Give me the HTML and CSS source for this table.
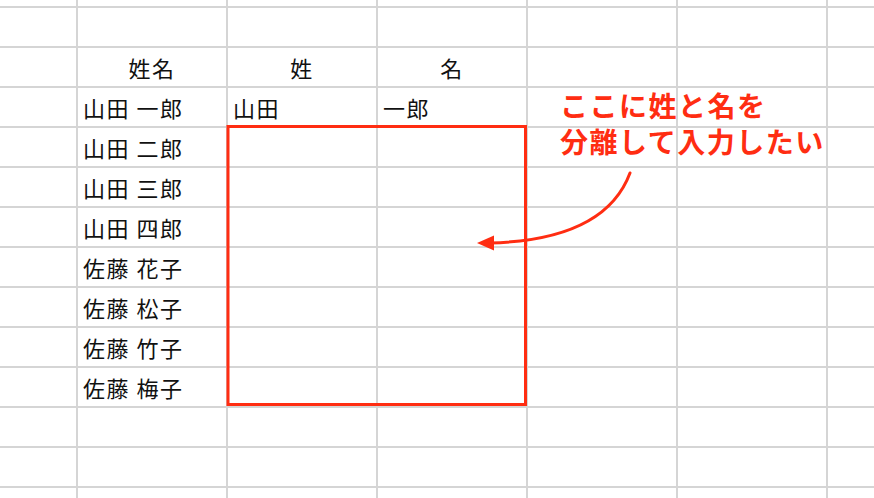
FILE: index.html
```html
<!DOCTYPE html>
<html lang="ja">
<head>
<meta charset="utf-8">
<title>姓名の分離</title>
<link rel="stylesheet" href="styles.css">
</head>
<body>
<div class="sheet">
  <div class="grid">
    <div class="c"></div><div class="c"></div><div class="c"></div><div class="c"></div><div class="c"></div><div class="c"></div><div class="c"></div>
    <div class="c"></div><div class="c"></div><div class="c"></div><div class="c"></div><div class="c"></div><div class="c"></div><div class="c"></div>
    <div class="c"></div><div class="c mid">姓名</div><div class="c mid">姓</div><div class="c mid">名</div><div class="c"></div><div class="c"></div><div class="c"></div>
    <div class="c"></div><div class="c">山田 一郎</div><div class="c">山田</div><div class="c">一郎</div><div class="c"></div><div class="c"></div><div class="c"></div>
    <div class="c"></div><div class="c">山田 二郎</div><div class="c"></div><div class="c"></div><div class="c"></div><div class="c"></div><div class="c"></div>
    <div class="c"></div><div class="c">山田 三郎</div><div class="c"></div><div class="c"></div><div class="c"></div><div class="c"></div><div class="c"></div>
    <div class="c"></div><div class="c">山田 四郎</div><div class="c"></div><div class="c"></div><div class="c"></div><div class="c"></div><div class="c"></div>
    <div class="c"></div><div class="c">佐藤 花子</div><div class="c"></div><div class="c"></div><div class="c"></div><div class="c"></div><div class="c"></div>
    <div class="c"></div><div class="c">佐藤 松子</div><div class="c"></div><div class="c"></div><div class="c"></div><div class="c"></div><div class="c"></div>
    <div class="c"></div><div class="c">佐藤 竹子</div><div class="c"></div><div class="c"></div><div class="c"></div><div class="c"></div><div class="c"></div>
    <div class="c"></div><div class="c">佐藤 梅子</div><div class="c"></div><div class="c"></div><div class="c"></div><div class="c"></div><div class="c"></div>
    <div class="c"></div><div class="c"></div><div class="c"></div><div class="c"></div><div class="c"></div><div class="c"></div><div class="c"></div>
    <div class="c"></div><div class="c"></div><div class="c"></div><div class="c"></div><div class="c"></div><div class="c"></div><div class="c"></div>
    <div class="c"></div><div class="c"></div><div class="c"></div><div class="c"></div><div class="c"></div><div class="c"></div><div class="c"></div>
  </div>
  <svg class="marks" width="874" height="498" viewBox="0 0 874 498">
    <rect x="228" y="126.5" width="297.5" height="278" fill="none" stroke="#ff2d12" stroke-width="3"/>
    <path d="M630 173 Q 605 240 490 243" fill="none" stroke="#ff2d12" stroke-width="3" stroke-linecap="round"/>
    <polygon points="477,243 494,235.5 494,250.5" fill="#ff2d12"/>
  </svg>
  <div class="note">
    <div class="note-line">ここに姓と名を</div>
    <div class="note-line">分離して入力したい</div>
  </div>
</div>
</body>
</html>
```
FILE: styles.css
```css
html, body {
  margin: 0;
  padding: 0;
  background: #ffffff;
}
.sheet {
  position: relative;
  width: 874px;
  height: 498px;
  overflow: hidden;
}
.grid {
  display: grid;
  grid-template-columns: 76px repeat(5, 148px) 1fr;
  grid-template-rows: 6px repeat(12, 38px) 1fr;
  gap: 2px;
  background: #d5d5d5;
  width: 874px;
  height: 498px;
  font-family: "Noto Sans CJK JP", sans-serif;
  font-size: 22px;
  letter-spacing: 1.5px;
  color: #111111;
}
.c {
  background: #ffffff;
  line-height: 38px;
  padding-left: 5px;
  white-space: nowrap;
  overflow: hidden;
}
.mid {
  text-align: center;
  padding-left: 0;
}
.marks {
  position: absolute;
  left: 0;
  top: 0;
}
.note {
  position: absolute;
  left: 560px;
  top: 87px;
  display: flex;
  flex-direction: column;
  font-family: "Noto Sans CJK JP", sans-serif;
  font-weight: 700;
  font-size: 28px;
  letter-spacing: 1.5px;
  color: #ff2d12;
  white-space: nowrap;
}
.note-line {
  height: 36px;
  line-height: 36px;
}
```
